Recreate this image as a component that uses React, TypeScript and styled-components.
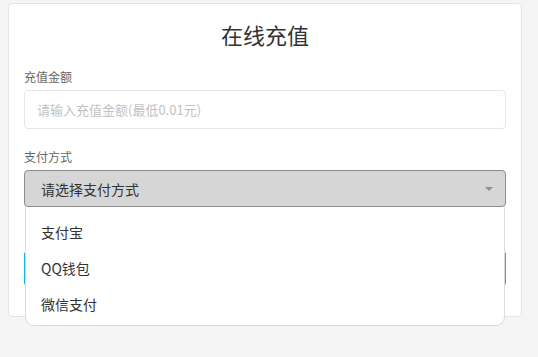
import React, { useState } from 'react';
import styled, { createGlobalStyle } from 'styled-components';

const GlobalStyle = createGlobalStyle`
  html, body {
    margin: 0;
    padding: 0;
    background-color: #f5f5f5;
    font-family: "Noto Sans CJK SC", "Noto Sans", sans-serif;
  }
`;

const Page = styled.div`
  width: 538px;
  height: 357px;
  padding: 3px 16px 0 8px;
  box-sizing: border-box;
  overflow: hidden;
`;

const Card = styled.div`
  background-color: white;
  border: 1px solid #e4e4e4;
  border-radius: 4px;
  padding: 15px 15px 31px;
`;

const Title = styled.h2`
  margin: 0 0 19px;
  font-size: 22px;
  line-height: 30px;
  font-weight: normal;
  color: #333;
  text-align: center;
`;

const Label = styled.div`
  font-size: 12px;
  line-height: 18px;
  color: #666;
  margin-bottom: 4px;
`;

const Field = styled.div<{ gap?: number }>`
  position: relative;
  margin-bottom: ${(p) => p.gap ?? 19}px;
`;

const Input = styled.input`
  display: block;
  width: 100%;
  height: 39px;
  box-sizing: border-box;
  border: 1px solid #e6e6e6;
  border-radius: 4px;
  padding: 0 12px;
  font-family: inherit;
  font-size: 13px;
  color: #333;
  outline: none;
  &::placeholder {
    color: #c2c2c2;
  }
`;

const SelectBox = styled.div`
  height: 37px;
  box-sizing: border-box;
  display: flex;
  align-items: center;
  justify-content: space-between;
  padding: 0 12px 0 16px;
  background-color: #d6d6d6;
  border: 1px solid #8c8c8c;
  border-radius: 4px;
  font-size: 14px;
  color: #333;
`;

const Caret = styled.span`
  width: 0;
  height: 0;
  border-left: 4px solid transparent;
  border-right: 4px solid transparent;
  border-top: 4px solid #8f8f8f;
`;

const Menu = styled.ul`
  position: absolute;
  top: 100%;
  left: 1px;
  right: 1px;
  z-index: 10;
  margin: 0;
  padding: 7px 0 3px;
  list-style: none;
  background-color: white;
  border: 1px solid #dcdcdc;
  border-top: none;
  border-radius: 0 0 9px 9px;
`;

const MenuItem = styled.li`
  height: 36px;
  line-height: 36px;
  padding-left: 15px;
  font-size: 14px;
  color: #333;
`;

const Submit = styled.button`
  display: block;
  width: 100%;
  height: 33px;
  border: none;
  border-radius: 2px;
  background-color: #10b4dc;
  color: white;
  font-family: inherit;
  font-size: 14px;
`;

const methods = ['支付宝', 'QQ钱包', '微信支付'];

function App() {
  const [open] = useState(true);

  return (
    <>
      <GlobalStyle />
      <Page>
        <Card>
          <Title>在线充值</Title>
          <Label>充值金额</Label>
          <Field>
            <Input placeholder="请输入充值金额(最低0.01元)" />
          </Field>
          <Label>支付方式</Label>
          <Field gap={45}>
            <SelectBox>
              请选择支付方式
              <Caret />
            </SelectBox>
            {open && (
              <Menu>
                {methods.map((m) => (
                  <MenuItem key={m}>{m}</MenuItem>
                ))}
              </Menu>
            )}
          </Field>
          <Submit>立即充值</Submit>
        </Card>
      </Page>
    </>
  );
}

export default App;
